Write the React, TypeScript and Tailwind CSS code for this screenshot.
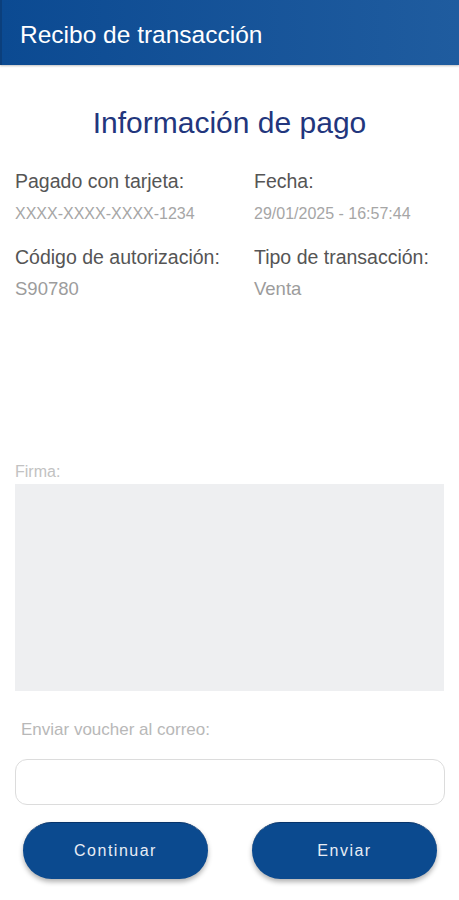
export default function App() {
  return (
    <div className="flex h-[900px] w-[459px] flex-col bg-white font-['Liberation_Sans',Arial,sans-serif]">
      <header className="flex h-[65px] shrink-0 items-center border-l-2 border-[#0b3f7c] bg-gradient-to-r from-[#0b4a92] to-[#1f5c9f] pl-[18px] pt-[5px] shadow-[0_1px_2px_rgba(0,0,0,0.25)]">
        <h1 className="text-[24.5px] leading-[28px] text-white">Recibo de transacción</h1>
      </header>

      <main className="flex flex-1 flex-col px-[15px]">
        <h2 className="mt-[40px] text-center text-[30px] leading-[36px] text-[#22367d]">
          Información de pago
        </h2>

        <div className="mt-[28px] grid grid-cols-[239px_1fr] gap-y-[21px]">
          <Field label="Pagado con tarjeta:" value="XXXX-XXXX-XXXX-1234" small />
          <Field label="Fecha:" value="29/01/2025 - 16:57:44" small />
          <Field label="Código de autorización:" value="S90780" />
          <Field label="Tipo de transacción:" value="Venta" />
        </div>

        <p className="mt-[162px] text-[16px] leading-[20px] text-[#c2c2c2]">Firma:</p>
        <div className="mt-[2px] h-[207px] bg-[#eeeff1]" />

        <p className="mt-[29px] pl-[6px] text-[17px] leading-[20px] text-[#b8b8b8]">
          Enviar voucher al correo:
        </p>
        <input
          type="email"
          className="mt-[19px] h-[46px] w-[430px] rounded-[12px] border border-[#dcdcdc] bg-white px-3 text-[16px] outline-none"
        />

        <div className="mt-[17px] flex justify-between pl-[8px] pr-[7px]">
          <ActionButton label="Continuar" />
          <ActionButton label="Enviar" />
        </div>
      </main>
    </div>
  );
}

function Field({ label, value, small }: { label: string; value: string; small?: boolean }) {
  return (
    <div className="flex flex-col">
      <span className="text-[19.5px] leading-[24px] text-[#555555]">{label}</span>
      <span
        className={
          small
            ? "mt-[11px] text-[16px] leading-[20px] text-[#a6a6a6]"
            : "mt-[9px] text-[18.5px] leading-[22px] text-[#9c9c9c]"
        }
      >
        {value}
      </span>
    </div>
  );
}

function ActionButton({ label }: { label: string }) {
  return (
    <button className="flex h-[57px] w-[185px] items-center justify-center rounded-full border-t border-[#06336a] bg-[#0b4a8f] text-[16px] tracking-[1.5px] text-[#e8edf5] shadow-[0_3px_5px_rgba(0,0,0,0.3)]">
      {label}
    </button>
  );
}
